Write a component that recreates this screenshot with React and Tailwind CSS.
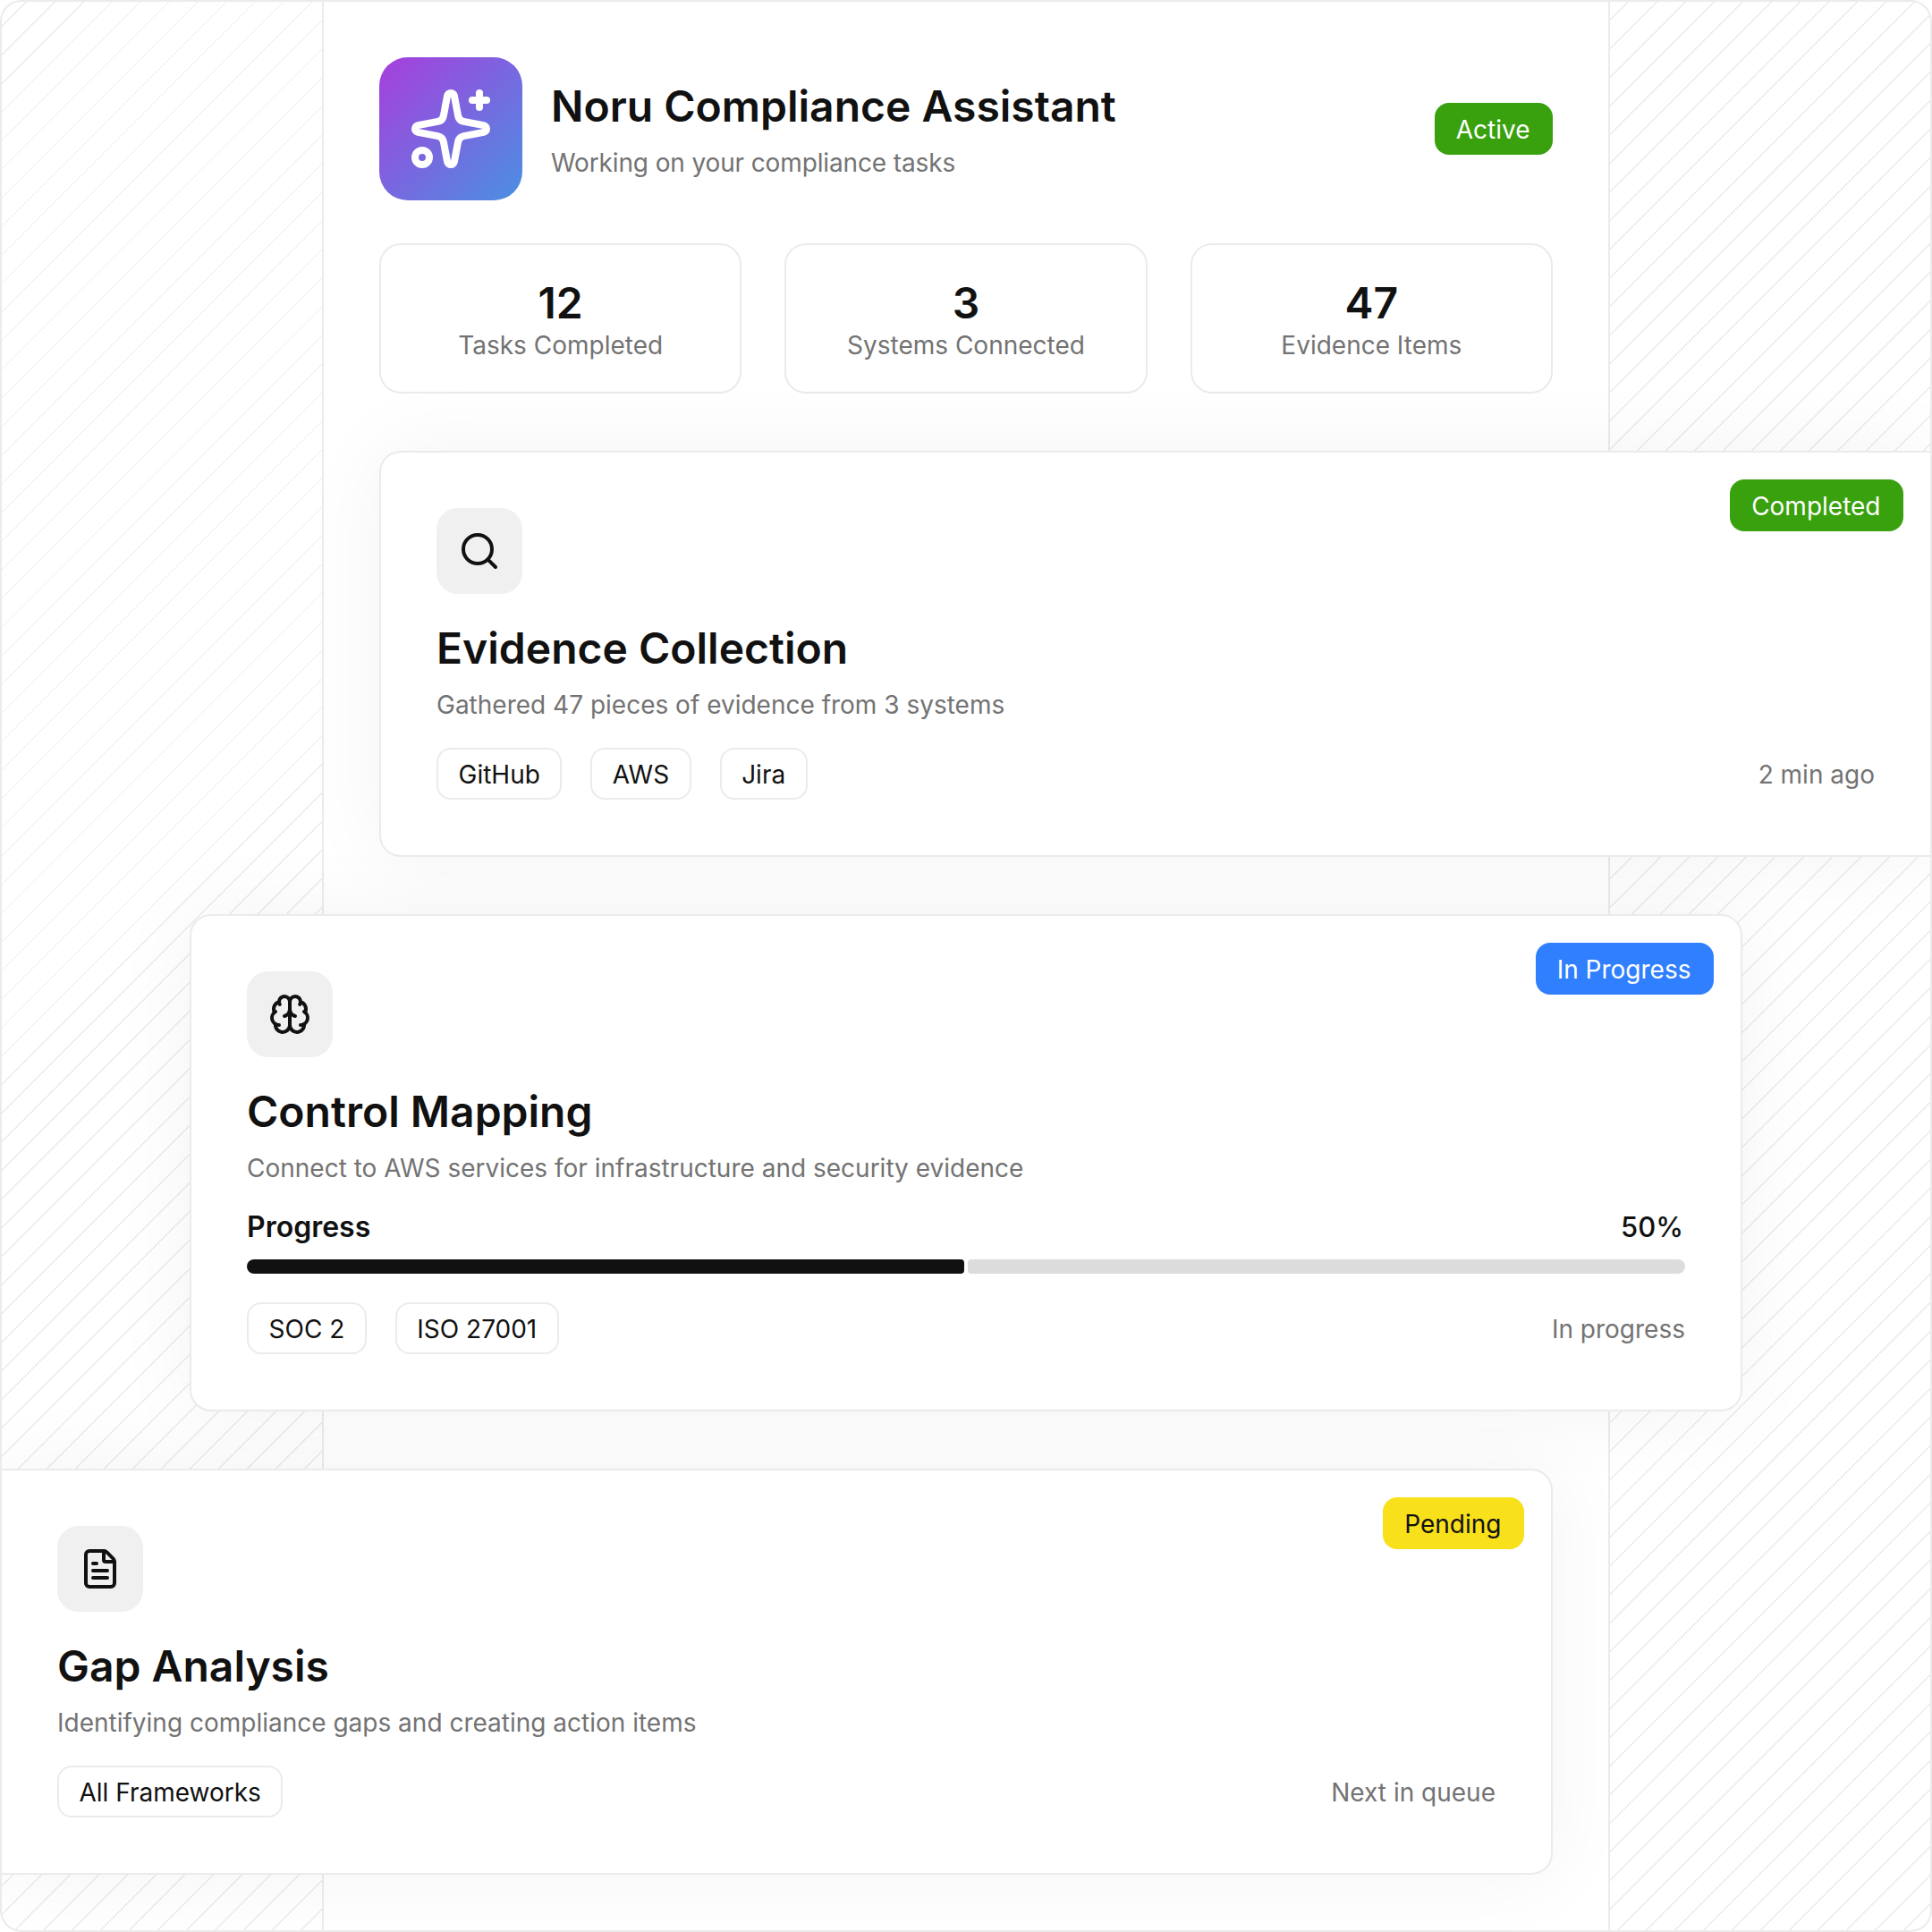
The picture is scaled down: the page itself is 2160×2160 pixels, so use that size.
import { Search, Brain, FileText, Sparkles } from "lucide-react";

const stats = [
  { value: "12", label: "Tasks Completed" },
  { value: "3", label: "Systems Connected" },
  { value: "47", label: "Evidence Items" },
];

const Tag = ({ children }) => (
  <div className="flex h-[58px] items-center rounded-[16px] border-2 border-[#ebebeb] bg-white px-[22.5px] pt-[2px] text-[28px] text-[#111111]">
    {children}
  </div>
);

const Badge = ({ className, children }) => (
  <div className={`absolute top-[30px] right-[30px] flex h-[58px] items-center rounded-[16px] pt-[2px] pr-[25.5px] pl-6 text-[28px] ${className}`}>
    {children}
  </div>
);

const IconBox = ({ children }) => (
  <div className="flex h-[96px] w-[96px] items-center justify-center rounded-[24px] bg-[#f0f0f0] text-[#111111]">
    {children}
  </div>
);

const Card = ({ className, icon, badge, title, text, tags, note, children }) => (
  <div className={`relative border-y-2 border-[#ebebeb] bg-white p-[62px] shadow-[0_0_96px_rgba(0,0,0,0.05)] ${className}`}>
    {badge}
    <IconBox>{icon}</IconBox>
    <h2 className="mt-8 text-[48px] leading-[58px] font-semibold text-[#111111]">{title}</h2>
    <p className="mt-[16px] text-[28px] leading-[36px] text-[#737373]">{text}</p>
    {children}
    <div className="mt-[30px] flex items-center justify-between">
      <div className="flex gap-8">
        {tags.map((t) => (
          <Tag key={t}>{t}</Tag>
        ))}
      </div>
      <span className="pt-[2px] text-[28px] text-[#737373]">{note}</span>
    </div>
  </div>
);

export default function App() {
  return (
    <div className="relative h-[2160px] w-[2160px] overflow-hidden rounded-[24px] border-2 border-[#ebebeb] bg-white font-['Inter',sans-serif]">
      {/* striped backdrop and the plain middle column */}
      <div className="absolute inset-0 flex justify-center bg-[repeating-linear-gradient(135deg,transparent_0,transparent_18.4px,#ebebeb_18.4px,#ebebeb_19.8px,transparent_19.8px,transparent_22.627px)]">
        <div className="w-[1440px] border-x-2 border-[#ebebeb] bg-white" />
      </div>

      <div className="relative">
        <div className="ml-[422px] w-[1312px] pt-[62px]">
          <div className="flex items-center justify-between">
            <div className="flex items-center gap-8">
              <div className="flex h-[160px] w-[160px] items-center justify-center rounded-[32px] bg-[linear-gradient(135deg,#a83edc,#4a90e2)] text-white">
                <Sparkles size={96} strokeWidth={2} />
              </div>
              <div className="pt-[2px]">
                <h1 className="text-[48px] leading-[58px] font-semibold text-[#111111]">Noru Compliance Assistant</h1>
                <p className="mt-[16px] text-[28px] leading-[36px] tracking-[-0.13px] text-[#737373]">Working on your compliance tasks</p>
              </div>
            </div>
            <div className="flex h-[58px] items-center rounded-[16px] bg-[#38a10d] pt-[2px] pr-[25.5px] pl-6 text-[28px] text-white">Active</div>
          </div>

          <div className="mt-[48px] grid grid-cols-3 gap-12">
            {stats.map((s) => (
              <div key={s.label} className="flex h-[168px] flex-col items-center justify-center rounded-[24px] border-2 border-[#ebebeb] bg-white pt-[2px]">
                <div className="text-[48px] leading-[58px] font-semibold text-[#111111]">{s.value}</div>
                <div className="text-[28px] leading-[36px] text-[#737373]">{s.label}</div>
              </div>
            ))}
          </div>
        </div>

        <div className="mt-[64px] flex flex-col gap-[64px]">
          <Card
            className="ml-[422px] w-[1734px] rounded-l-[24px] border-l-2"
            icon={<Search size={48} />}
            badge={<Badge className="bg-[#38a10d] text-white">Completed</Badge>}
            title="Evidence Collection"
            text="Gathered 47 pieces of evidence from 3 systems"
            tags={["GitHub", "AWS", "Jira"]}
            note="2 min ago"
          />

          <Card
            className="ml-[210px] w-[1736px] rounded-[24px] border-x-2"
            icon={<Brain size={48} />}
            badge={<Badge className="bg-[#2f7fff] text-white">In Progress</Badge>}
            title="Control Mapping"
            text="Connect to AWS services for infrastructure and security evidence"
            tags={["SOC 2", "ISO 27001"]}
            note="In progress"
          >
            <div className="mt-[28px] flex items-center justify-between text-[#111111]">
              <span className="text-[32px] leading-[40px] font-semibold">Progress</span>
              <span className="pr-[2px] text-[31px] leading-[40px] font-medium">50%</span>
            </div>
            <div className="mt-[16px] mb-[32px] flex h-4 gap-1">
              <div className="flex-1 rounded-l-[8px] rounded-r-[4px] bg-[#111111]" />
              <div className="flex-1 rounded-l-[4px] rounded-r-[8px] bg-[#dcdcdc]" />
            </div>
          </Card>

          <Card
            className="w-[1734px] rounded-r-[24px] border-r-2"
            icon={<FileText size={48} />}
            badge={<Badge className="bg-[#f8e01b] text-[#111111]">Pending</Badge>}
            title="Gap Analysis"
            text="Identifying compliance gaps and creating action items"
            tags={["All Frameworks"]}
            note="Next in queue"
          />
        </div>
      </div>
    </div>
  );
}
